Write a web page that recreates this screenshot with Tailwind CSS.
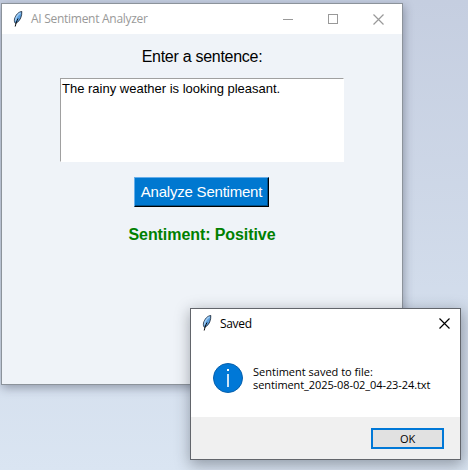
<!DOCTYPE html>
<html lang="en"><head><meta charset="utf-8"><title>AI Sentiment Analyzer</title>
<script src="https://cdn.jsdelivr.net/npm/@tailwindcss/browser@4"></script></head>
<body class="relative w-[468px] h-[470px] overflow-hidden bg-linear-to-b from-[#c5cee0] to-[#dae5f2] whitespace-nowrap">
<svg class="hidden"><symbol id="feather" viewBox="0 0 10 16">
<path d="M8.8.5C5.5.7 2.4 4.3 1.5 8.2c-.3 1.6-.1 3 .8 4.1l1.5-.6C7.3 9.8 9.1 4.6 8.8.5Z" fill="#5b9fe0" stroke="#151f2d" stroke-width=".8"/>
<path d="M7.6 1.8C5 3.2 2.8 6.8 2.5 9.8" fill="none" stroke="#a5d0f5" stroke-width="1.4"/>
<path d="M5 7.5C3.8 9.8 3 12 2.2 15.5" fill="none" stroke="#0a0a0a" stroke-width="1"/></symbol></svg>
<main class="absolute left-px top-[3px] w-[402px] h-[382px] border border-[#8c939b] bg-[#eff3f8] flex flex-col shadow-[1px_3px_9px_0px_rgba(40,45,65,0.38)]">
<header class="h-[30px] shrink-0 bg-white flex items-center pl-[11px] font-['Open_Sans',sans-serif] text-[12px] text-[#999]">
<svg class="w-[10px] h-4 mr-2"><use href="#feather"/></svg><span class="tracking-[-0.28px]">AI Sentiment Analyzer</span>
<svg class="ml-auto mr-[18px] w-[102px] h-[11px]" viewBox="0 0 102 11" fill="none" stroke="#999"><path d="M1 5.5h10M46.5.5h9v9h-9z" shape-rendering="crispEdges"/><path d="m91.5.5 10 10m0-10-10 10" stroke-width="1.2"/></svg>
</header>
<section class="flex flex-col items-center font-['Liberation_Sans',Arial,sans-serif] text-black">
<p class="mt-[14px] h-[18px] leading-[18px] text-[16px] tracking-[-0.28px]">Enter a sentence:</p>
<div class="mt-[12px] w-[284px] h-[84px] border border-t-[#a0a0a0] border-l-[#a0a0a0] border-r-white border-b-white bg-white pl-px pt-[2px] text-[13px] leading-[16px]"><span>The rainy weather is looking pleasant.</span></div>
<button class="mt-[15px] mr-px w-[135px] h-[30px] border border-t-[#66aeea] border-l-[#66aeea] border-r-black border-b-black shadow-[inset_-1px_-1px_0_#00508c] bg-[#0078d0] pt-px text-white text-[15px] tracking-[-0.22px]">Analyze Sentiment</button>
<p class="mt-[19px] h-[18px] leading-[18px] text-[16px] tracking-[-0.08px] font-bold text-[#008000]">Sentiment: Positive</p>
</section></main>
<section class="absolute left-[190px] top-[308px] w-[271px] h-[152px] border border-[#62656b] bg-white flex flex-col font-['Open_Sans',sans-serif] text-black shadow-[1px_4px_14px_1px_rgba(40,45,55,0.4)]">
<header class="h-[30px] shrink-0 flex items-center pl-[11px] text-[12px]"><svg class="w-[10px] h-4 mr-2 -mt-[2px]"><use href="#feather"/></svg><span class="tracking-[-0.33px]">Saved</span>
<svg class="ml-auto mr-[10px] -mt-[2px] w-[11px] h-[11px]" viewBox="0 0 11 11" stroke="#000"><path d="m.5.5 10 10m0-10-10 10" stroke-width="1.2"/></svg></header>
<div class="h-[78px] shrink-0 flex pl-[21px] pt-[23px]">
<svg class="w-8 h-8 mr-[9px]" viewBox="0 0 32 32"><circle cx="16" cy="16" r="14.5" fill="#0078d7" stroke="#0860ac"/><path d="M15 7h2v2h-2zM15.2 12h1.6v13h-1.6z" fill="white"/></svg>
<p class="pt-[3px] text-[11px] leading-[13px]">Sentiment saved to file:<br><span class="tracking-[-0.09px]">sentiment_2025-08-02_04-23-24.txt</span></p></div>
<footer class="grow bg-[#f0f0f0] flex justify-end pr-4 pt-[11px]"><button class="w-[73px] h-[21px] border-2 border-[#0078d7] bg-[#e1e1e1] text-[11px] leading-[17px] tracking-[-0.2px]">OK</button></footer>
</section></body></html>
